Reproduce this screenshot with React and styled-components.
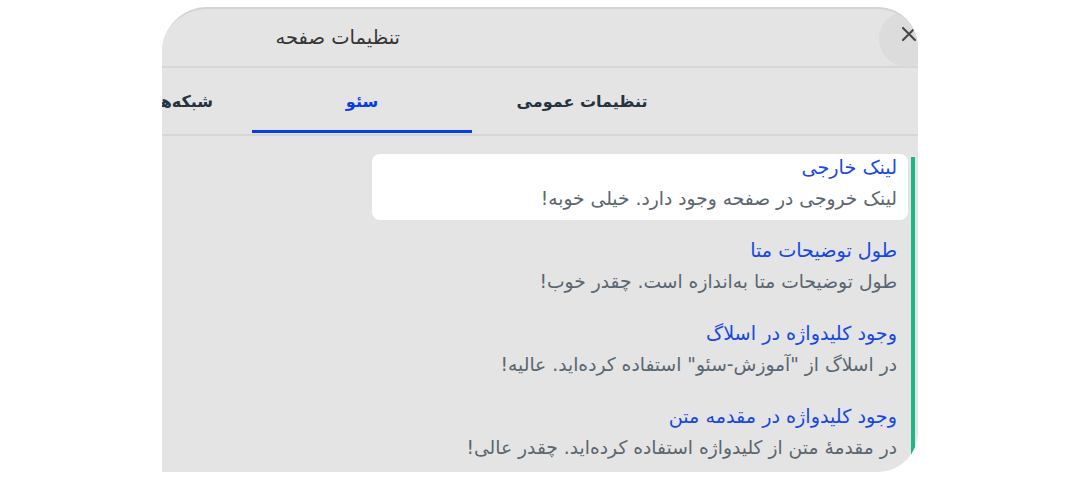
import React from "react";
import styled, { createGlobalStyle } from "styled-components";

const Global = createGlobalStyle`
  html, body { margin: 0; padding: 0; background: #ffffff; }
  body { font-family: "DejaVu Sans", "Noto Sans", sans-serif; }
`;

const Page = styled.div`
  display: flex;
  justify-content: center;
  padding-top: 7px;
`;

const Panel = styled.div`
  direction: rtl;
  width: 756px;
  height: 465px;
  box-sizing: border-box;
  background: #e4e4e4;
  border-top: 2px solid #d3d3d3;
  border-radius: 45px 40px 40px 0;
  overflow: hidden;
  display: flex;
  flex-direction: column;
`;

const Header = styled.div`
  height: 57px;
  flex-shrink: 0;
  display: flex;
  align-items: center;
  border-bottom: 2px solid #d6d6d6;
`;

const CloseButton = styled.button`
  width: 56px;
  height: 56px;
  flex-shrink: 0;
  margin-right: -17px;
  margin-top: 2px;
  border: none;
  border-radius: 50%;
  background: #dcdcdc;
  display: flex;
  align-items: center;
  justify-content: center;
  padding: 0 0 10px 4px;
  cursor: pointer;
`;

const Title = styled.h1`
  margin: 0 479px 0 0;
  font-size: 19.5px;
  font-weight: 400;
  color: #343434;
  white-space: nowrap;
`;

const Tabs = styled.div`
  height: 66px;
  flex-shrink: 0;
  display: flex;
  padding-right: 226px;
  border-bottom: 2px solid #d6d6d6;
  overflow: hidden;
`;

const Tab = styled.div`
  position: relative;
  flex-shrink: 0;
  width: ${(p) => (p.$auto ? "auto" : "220px")};
  padding: ${(p) => (p.$auto ? "0 39px" : "0")};
  display: flex;
  align-items: center;
  justify-content: center;
  font-size: 16px;
  font-weight: 700;
  white-space: nowrap;
  color: ${(p) => (p.$active ? "#0a3de8" : "#253340")};

  &::after {
    content: "";
    display: ${(p) => (p.$active ? "block" : "none")};
    position: absolute;
    left: 0;
    right: 0;
    bottom: 1px;
    height: 3px;
    background: #0a3de8;
  }
`;

const Content = styled.div`
  flex: 1;
  display: flex;
  padding-top: 18px;
`;

const Rail = styled.div`
  width: 4px;
  flex-shrink: 0;
  margin: 3px 3px 0 3px;
  background: #1eb587;
`;

const List = styled.div`
  width: 536px;
  display: flex;
  flex-direction: column;
  gap: 17px;
`;

const Item = styled.div`
  padding: 0 11px 4px 11px;
  border-radius: 8px;
  background: ${(p) => (p.$highlight ? "#ffffff" : "transparent")};
`;

const ItemTitle = styled.div`
  line-height: 27px;
  font-size: 19.2px;
  color: #1747e6;
  white-space: nowrap;
`;

const ItemText = styled.div`
  line-height: 35px;
  font-size: 18.7px;
  color: #5a6670;
  white-space: nowrap;
`;

const items = [
  { title: "لینک خارجی", text: "لینک خروجی در صفحه وجود دارد. خیلی خوبه!", highlight: true },
  { title: "طول توضیحات متا", text: "طول توضیحات متا به‌اندازه است. چقدر خوب!" },
  { title: "وجود کلیدواژه در اسلاگ", text: 'در اسلاگ از "آموزش-سئو" استفاده کرده‌اید. عالیه!' },
  { title: "وجود کلیدواژه در مقدمه متن", text: "در مقدمهٔ متن از کلیدواژه استفاده کرده‌اید. چقدر عالی!" },
];

export default function App() {
  return (
    <>
      <Global />
      <Page>
        <Panel>
          <Header>
            <CloseButton aria-label="بستن">
              <svg width="16" height="16" viewBox="0 0 16 16">
                <path d="M2 2 L14 14 M14 2 L2 14" stroke="#4a4a4a" strokeWidth="2.2" strokeLinecap="round" />
              </svg>
            </CloseButton>
            <Title>تنظیمات صفحه</Title>
          </Header>
          <Tabs>
            <Tab>تنظیمات عمومی</Tab>
            <Tab $active>سئو</Tab>
            <Tab $auto>شبکه‌ها</Tab>
          </Tabs>
          <Content>
            <Rail />
            <List>
              {items.map((it) => (
                <Item key={it.title} $highlight={it.highlight}>
                  <ItemTitle>{it.title}</ItemTitle>
                  <ItemText>{it.text}</ItemText>
                </Item>
              ))}
            </List>
          </Content>
        </Panel>
      </Page>
    </>
  );
}
